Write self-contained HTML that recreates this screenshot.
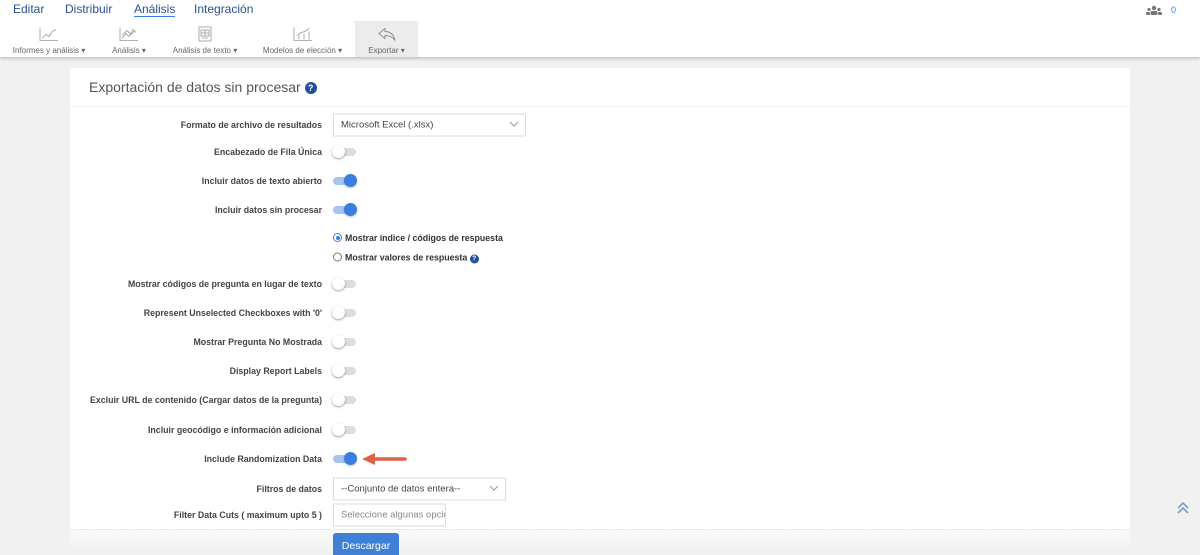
<!DOCTYPE html>
<html><head><meta charset="utf-8"><style>
*{margin:0;padding:0;box-sizing:border-box}
html,body{width:1200px;height:555px;overflow:hidden}
body{background:#f1f1f1;font-family:"Liberation Sans",sans-serif;position:relative}
.abs{position:absolute}
.top{left:0;top:0;width:1200px;height:21px;background:#fff}
.top span{position:absolute;top:2px;font-size:12px;color:#2a4f8f}
.tb{left:0;top:21px;width:1200px;height:36px;background:#fff;box-shadow:0 2px 3px rgba(0,0,0,.18)}
.tbi{position:absolute;top:0;height:36px;text-align:center;font-size:8px;color:#666}
.tbi svg{display:block;margin:5px auto 4px}
.card{left:70px;top:68px;width:1060px;height:487px;background:#fff}
.title{left:89px;top:79px;font-size:14px;color:#555}
.lbl{position:absolute;right:878px;font-size:8.8px;font-weight:bold;color:#444;white-space:nowrap;transform:translateY(-50%)}
.tg{position:absolute;left:333px;width:23px;height:8px;border-radius:4px;background:#ddd;transform:translateY(-50%)}
.tg::after{content:"";position:absolute;left:-1px;top:-3px;width:13px;height:13px;border-radius:50%;background:#fff;box-shadow:0 1px 2px rgba(0,0,0,.4)}
.tg.on{background:#a8c5ef}
.tg.on::after{left:11px;background:#3a7fe0;box-shadow:0 1px 2px rgba(0,0,0,.25)}
.sel{position:absolute;left:333px;height:23px;border:1px solid #ddd;background:#fff;font-size:9.5px;color:#444;padding:5px 7px;transform:translateY(-50%)}
.sel i{position:absolute;right:8px;top:5px;width:6px;height:6px;border-right:1px solid #999;border-bottom:1px solid #999;transform:rotate(45deg)}
.rad{position:absolute;left:333px;font-size:8.8px;font-weight:bold;color:#333;transform:translateY(-50%)}
.rad b{display:inline-block;width:9px;height:9px;border:1px solid #777;border-radius:50%;vertical-align:-1px;margin-right:3px;position:relative}
.rad b.on{border-color:#3a7fe0}
.rad b.on::after{content:"";position:absolute;left:1.5px;top:1.5px;width:4px;height:4px;border-radius:50%;background:#3a7fe0}
.q{display:inline-block;width:9px;height:9px;border-radius:50%;background:#1f4fa0;color:#fff;font-size:7px;text-align:center;line-height:9px;font-weight:bold}
</style></head><body>
<div class="abs top">
<span style="left:13px">Editar</span><span style="left:65px">Distribuir</span>
<span style="left:134px;border-bottom:1px solid #3a7fe0">Análisis</span><span style="left:194px">Integración</span>
<svg style="position:absolute;left:1146px;top:5px" width="16" height="10" viewBox="0 0 16 10"><circle cx="8" cy="3" r="2.2" fill="#777"/><circle cx="3" cy="4.5" r="1.6" fill="#777"/><circle cx="13" cy="4.5" r="1.6" fill="#777"/><rect x="4.5" y="6" width="7" height="4" rx="1.5" fill="#777"/><rect x="0" y="7" width="4" height="3" rx="1" fill="#777"/><rect x="12" y="7" width="4" height="3" rx="1" fill="#777"/></svg>
<span style="left:1171px;color:#3a7fe0;font-size:9px;top:5px">0</span>
</div>
<div class="abs tb">
<div class="tbi" style="left:0;width:98px"><svg width="20" height="16" viewBox="0 0 20 15" fill="none" stroke="#999" stroke-width=".8"><path d="M1 1V14H19M3 12L7 8L10 10L13 5L17 3"/></svg>Informes y análisis ▾</div>
<div class="tbi" style="left:98px;width:62px"><svg width="20" height="16" viewBox="0 0 20 15" fill="none" stroke="#999" stroke-width=".8"><path d="M1 1V14H19M3 12L7 7L10 10L14 3L17 6"/><path d="M3 9L8 4L12 8L16 4"/></svg>Análisis ▾</div>
<div class="tbi" style="left:160px;width:90px"><svg width="16" height="16" viewBox="0 0 16 16" fill="none" stroke="#999" stroke-width=".8"><rect x="2" y="1" width="12" height="14"/><rect x="4" y="4" width="8" height="6"/><path d="M8 4V10M4 7H12M5 12H11"/></svg>Análisis de texto ▾</div>
<div class="tbi" style="left:250px;width:105px"><svg width="20" height="16" viewBox="0 0 20 15" fill="none" stroke="#999" stroke-width=".8"><path d="M1 1V14H19M6 13V9M11 13V7M16 13V5M4 9L8 6L12 5L16 2"/></svg>Modelos de elección ▾</div>
<div class="tbi" style="left:355px;width:63px;background:#ececec"><svg width="20" height="16" viewBox="0 0 20 15" fill="none" stroke="#888" stroke-width=".9"><path d="M8 2L2 7L8 12V9C12 9 15 10 18 14C17 9 14 5 8 5Z"/></svg>Exportar ▾</div>
</div>
<div class="abs card"></div>
<div class="abs" style="left:70px;top:106px;width:1060px;height:1px;background:#eee"></div>
<div class="abs title">Exportación de datos sin procesar <span class="q" style="width:12px;height:12px;line-height:12px;font-size:9px;vertical-align:1px">?</span></div>

<div class="lbl" style="top:125px">Formato de archivo de resultados</div>
<div class="sel" style="top:125px;width:193px">Microsoft Excel (.xlsx)<i></i></div>
<div class="lbl" style="top:152px">Encabezado de Fila Única</div><div class="tg" style="top:152px"></div>
<div class="lbl" style="top:181px">Incluir datos de texto abierto</div><div class="tg on" style="top:181px"></div>
<div class="lbl" style="top:210px">Incluir datos sin procesar</div><div class="tg on" style="top:210px"></div>
<div class="rad" style="top:238px"><b class="on"></b>Mostrar índice / códigos de respuesta</div>
<div class="rad" style="top:258px"><b></b>Mostrar valores de respuesta <span class="q">?</span></div>
<div class="lbl" style="top:284px">Mostrar códigos de pregunta en lugar de texto</div><div class="tg" style="top:284px"></div>
<div class="lbl" style="top:313px">Represent Unselected Checkboxes with '0'</div><div class="tg" style="top:313px"></div>
<div class="lbl" style="top:342px">Mostrar Pregunta No Mostrada</div><div class="tg" style="top:342px"></div>
<div class="lbl" style="top:371px">Display Report Labels</div><div class="tg" style="top:371px"></div>
<div class="lbl" style="top:400px">Excluir URL de contenido (Cargar datos de la pregunta)</div><div class="tg" style="top:400px"></div>
<div class="lbl" style="top:430px">Incluir geocódigo e información adicional</div><div class="tg" style="top:430px"></div>
<div class="lbl" style="top:459px">Include Randomization Data</div><div class="tg on" style="top:459px"></div>
<svg class="abs" style="left:360px;top:451px" width="48" height="16" viewBox="0 0 48 16"><path d="M14 8H45" stroke="#e0604a" stroke-width="3.5" stroke-linecap="round"/><path d="M2 8L15 2V14Z" fill="#e0604a"/></svg>
<div class="lbl" style="top:489px">Filtros de datos</div>
<div class="sel" style="top:489px;width:173px">--Conjunto de datos entera--<i></i></div>
<div class="lbl" style="top:515px">Filter Data Cuts ( maximum upto 5 )</div>
<div class="sel" style="top:515px;width:113px;color:#888;overflow:hidden;white-space:nowrap;padding-right:0">Seleccione algunas opciones</div>
<div class="abs" style="left:70px;top:529px;width:1060px;height:26px;background:linear-gradient(#fafafa,#f0f0f0);border-top:1px dashed #e6e6e6"></div>
<div class="abs" style="left:333px;top:533px;width:66px;height:26px;background:#3d80d6;border-radius:3px;color:#fff;font-size:10.5px;text-align:center;padding-top:7px">Descargar</div>
<svg class="abs" style="left:1176px;top:501px" width="14" height="14" viewBox="0 0 14 14" fill="none" stroke="#7a9cc8" stroke-width="1.6"><path d="M2 7L7 2L12 7M2 12L7 7L12 12"/></svg>
</body></html>
